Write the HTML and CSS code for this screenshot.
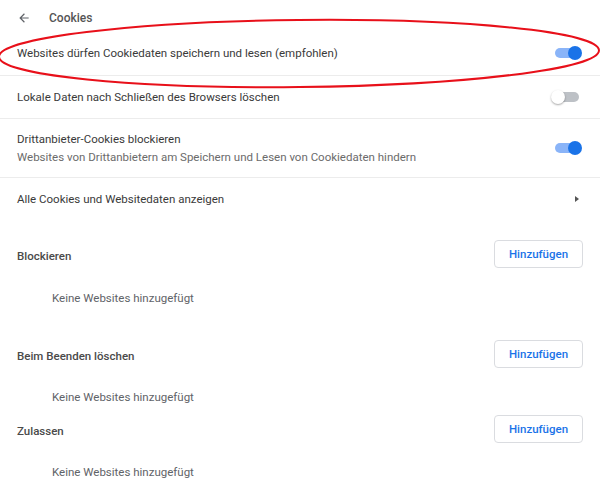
FILE: index.html
```html
<!DOCTYPE html>
<html lang="de">
<head>
<meta charset="utf-8">
<title>Cookies</title>
<link rel="stylesheet" href="styles.css">
</head>
<body>
<div class="page">
  <div class="header">
    <svg class="back" width="14" height="14" viewBox="0 0 24 24"><path d="M20 11H7.83l5.59-5.59L12 4l-8 8 8 8 1.41-1.41L7.83 13H20v-2z" fill="#5f6368"/></svg>
    <span class="title">Cookies</span>
  </div>

  <div class="row r1">
    <span class="label">Websites dürfen Cookiedaten speichern und lesen (empfohlen)</span>
    <span class="toggle on"><span class="track"></span><span class="knob"></span></span>
  </div>
  <div class="row r2">
    <span class="label">Lokale Daten nach Schließen des Browsers löschen</span>
    <span class="toggle"><span class="track"></span><span class="knob"></span></span>
  </div>
  <div class="row r3">
    <div class="two">
      <span class="label">Drittanbieter-Cookies blockieren</span>
      <span class="sub">Websites von Drittanbietern am Speichern und Lesen von Cookiedaten hindern</span>
    </div>
    <span class="toggle on"><span class="track"></span><span class="knob"></span></span>
  </div>
  <div class="row r4 noborder">
    <span class="label">Alle Cookies und Websitedaten anzeigen</span>
    <span class="arrow"></span>
  </div>

  <div class="section s1">
    <span class="stitle">Blockieren</span>
    <button class="btn">Hinzufügen</button>
  </div>
  <div class="empty e1">Keine Websites hinzugefügt</div>

  <div class="section s2">
    <span class="stitle">Beim Beenden löschen</span>
    <button class="btn">Hinzufügen</button>
  </div>
  <div class="empty e2">Keine Websites hinzugefügt</div>

  <div class="section s3">
    <span class="stitle">Zulassen</span>
    <button class="btn">Hinzufügen</button>
  </div>
  <div class="empty e3">Keine Websites hinzugefügt</div>

  <svg class="mark" width="600" height="100" viewBox="0 0 600 100">
    <ellipse cx="299" cy="53.5" rx="300" ry="33.5" transform="rotate(-0.6 299 53.5)" fill="none" stroke="#e8101a" stroke-width="2"/>
  </svg>
</div>
</body>
</html>
```
FILE: styles.css
```css
html, body {
  margin: 0;
  padding: 0;
  background: #fff;
}
body {
  font-family: Roboto, "Liberation Sans", Arial, sans-serif;
  font-size: 11.5px;
  color: #3a3a3a;
}
.page {
  position: relative;
  width: 600px;
  height: 500px;
  overflow: hidden;
}
.header {
  height: 26px;
  padding-top: 5px;
  display: flex;
  align-items: center;
  padding-left: 17px;
}
.back {
  display: block;
}
.title {
  margin-left: 18px;
  font-size: 12px;
  font-weight: 500;
  color: #555;
}
.row {
  display: flex;
  align-items: center;
  justify-content: space-between;
  padding: 0 19px 0 17px;
  border-bottom: 1px solid #ececec;
}
.row.noborder {
  border-bottom: none;
}
.r1 { height: 44px; }
.r2 { height: 42px; }
.r3 { height: 58px; }
.r4 { height: 42px; }
.label {
  color: #3a3a3a;
}
.two {
  display: flex;
  flex-direction: column;
  gap: 4px;
  padding-bottom: 1px;
}
.sub {
  color: #6b6b6b;
}
.toggle {
  position: relative;
  width: 27px;
  height: 14px;
  flex: none;
}
.toggle .track {
  position: absolute;
  left: 1px;
  top: 2px;
  width: 24px;
  height: 10px;
  border-radius: 5px;
  background: #bdc1c6;
}
.toggle .knob {
  position: absolute;
  left: -3px;
  top: 0;
  width: 14px;
  height: 14px;
  border-radius: 50%;
  background: #fff;
  box-shadow: 0 1px 2px rgba(0,0,0,0.35);
}
.toggle.on .track {
  background: #8ab4f8;
}
.toggle.on .knob {
  left: 14px;
  background: #1a73e8;
  box-shadow: none;
}
.arrow {
  width: 0;
  height: 0;
  border-top: 3.5px solid transparent;
  border-bottom: 3.5px solid transparent;
  border-left: 4px solid #555;
  margin-right: 2px;
}
.section {
  display: flex;
  align-items: center;
  justify-content: space-between;
  height: 28px;
  padding: 0 17px 0 17px;
}
.stitle {
  font-weight: 500;
  color: #4a4a4a;
  padding-top: 3px;
}
.btn {
  width: 89px;
  height: 28px;
  border: 1px solid #dadce0;
  border-radius: 4px;
  background: #fff;
  color: #1a73e8;
  font-family: inherit;
  font-size: 11.5px;
  font-weight: 500;
  padding: 0;
}
.empty {
  height: 30px;
  display: flex;
  align-items: center;
  padding-left: 52px;
  color: #5f6368;
}
.s1 { margin-top: 20px; }
.e1 { margin-top: 15px; }
.s2 { margin-top: 27px; }
.e2 { margin-top: 14px; }
.s3 { margin-top: 3px; }
.e3 { margin-top: 14px; }
.mark {
  position: absolute;
  left: 0;
  top: 0;
  pointer-events: none;
}
```
